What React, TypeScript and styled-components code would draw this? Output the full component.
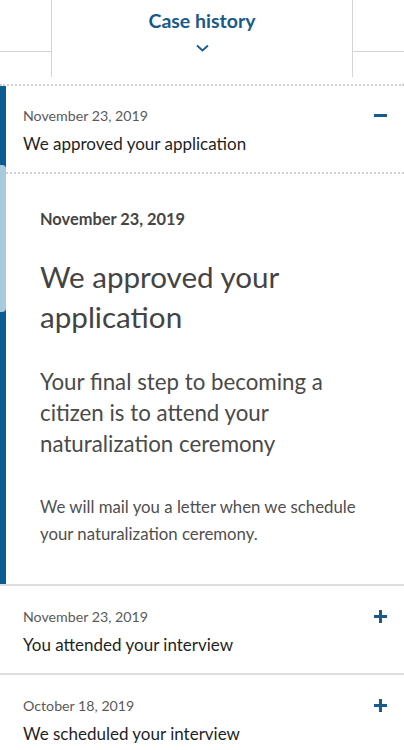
import React from "react";
import styled, { createGlobalStyle } from "styled-components";

const Global = createGlobalStyle`
  html, body { margin: 0; padding: 0; background: #fff; }
  body { font-family: "Lato", "Open Sans", sans-serif; -webkit-font-smoothing: antialiased; }
  * { box-sizing: border-box; }
`;

const Page = styled.div`
  width: 404px;
  height: 750px;
  overflow: hidden;
  position: relative;
  background: #fff;
`;

const Header = styled.header`
  display: flex;
  height: 84px;
`;

const Side = styled.div`
  flex: 1;
  height: 52px;
  border-bottom: 1px solid #d4d4d4;
`;

const Tab = styled.div`
  width: 302px;
  height: 77px;
  border-left: 1px solid #d4d4d4;
  border-right: 1px solid #d4d4d4;
  display: flex;
  flex-direction: column;
  align-items: center;
  padding-top: 8px;
`;

const TabTitle = styled.div`
  font-size: 19.5px;
  font-weight: 700;
  color: #1a5a8a;
  line-height: 26px;
`;

const Chevron = styled.svg`
  margin-top: 10px;
`;

const Item = styled.section<{ $dotted?: boolean }>`
  border-top: ${(p) => (p.$dotted ? "2px dotted #cfcfcf" : "none")};
  border-bottom: 2px solid #dedede;
`;

const Accent = styled.div`
  border-left: 6px solid #0b5c93;
`;

const Row = styled.div<{ $divider?: boolean }>`
  display: flex;
  justify-content: space-between;
  align-items: flex-start;
  padding: 20px 17px 18px 17px;
  height: 88px;
  border-bottom: ${(p) => (p.$divider ? "2px dotted #cfcfcf" : "none")};
`;

const RowFull = styled(Row)`
  padding-left: 23px;
  padding-top: 21px;
  height: 87px;
`;

const RowText = styled.div`
  display: flex;
  flex-direction: column;
`;

const RowDate = styled.div`
  font-size: 14.2px;
  line-height: 20px;
  color: #5a5a5a;
`;

const RowTitle = styled.div`
  margin-top: 5px;
  font-size: 17px;
  line-height: 26px;
  color: #1f1f1f;
`;

const Icon = styled.svg`
  margin-top: 3px;
  flex: none;
`;

const Body = styled.div`
  padding: 35px 30px 37px 34px;
  color: #444;
`;

const BodyDate = styled.div`
  font-size: 16.4px;
  line-height: 20px;
  font-weight: 700;
  color: #454545;
`;

const Heading = styled.h2`
  margin: 28px 0 0;
  font-size: 29.6px;
  line-height: 40px;
  font-weight: 400;
  color: #444;
`;

const Sub = styled.p`
  margin: 29px 0 0;
  font-size: 22.3px;
  line-height: 31px;
  color: #4a4a4a;
`;

const Para = styled.p`
  margin: 34px 0 0;
  font-size: 16.8px;
  line-height: 27px;
  color: #4f4f4f;
`;

const Thumb = styled.div`
  position: absolute;
  left: 0;
  top: 165px;
  width: 6px;
  height: 147px;
  background: #a9c9dd;
  border-radius: 0 4px 4px 0;
`;

const Minus = () => (
  <Icon width="13" height="13" viewBox="0 0 13 13">
    <rect x="0" y="5" width="13" height="3" fill="#1a5a8a" />
  </Icon>
);

const Plus = () => (
  <Icon width="13" height="13" viewBox="0 0 13 13">
    <rect x="0" y="5" width="13" height="3" fill="#1a5a8a" />
    <rect x="5" y="0" width="3" height="13" fill="#1a5a8a" />
  </Icon>
);

const collapsed = [
  { date: "November 23, 2019", title: "You attended your interview" },
  { date: "October 18, 2019", title: "We scheduled your interview" },
];

export default function App() {
  return (
    <>
      <Global />
      <Page>
        <Header>
          <Side />
          <Tab>
            <TabTitle>Case history</TabTitle>
            <Chevron width="13" height="8" viewBox="0 0 13 8">
              <path d="M1 1.5 L6.5 6.5 L12 1.5" fill="none" stroke="#1a5a8a" strokeWidth="1.8" />
            </Chevron>
          </Tab>
          <Side />
        </Header>

        <Item $dotted>
          <Accent>
            <Row $divider>
              <RowText>
                <RowDate>November 23, 2019</RowDate>
                <RowTitle>We approved your application</RowTitle>
              </RowText>
              <Minus />
            </Row>
            <Body>
              <BodyDate>November 23, 2019</BodyDate>
              <Heading>We approved your application</Heading>
              <Sub>Your final step to becoming a citizen is to attend your naturalization ceremony</Sub>
              <Para>We will mail you a letter when we schedule your naturalization ceremony.</Para>
            </Body>
          </Accent>
        </Item>

        {collapsed.map((c) => (
          <Item key={c.title}>
            <RowFull>
              <RowText>
                <RowDate>{c.date}</RowDate>
                <RowTitle>{c.title}</RowTitle>
              </RowText>
              <Plus />
            </RowFull>
          </Item>
        ))}
        <Thumb />
      </Page>
    </>
  );
}
